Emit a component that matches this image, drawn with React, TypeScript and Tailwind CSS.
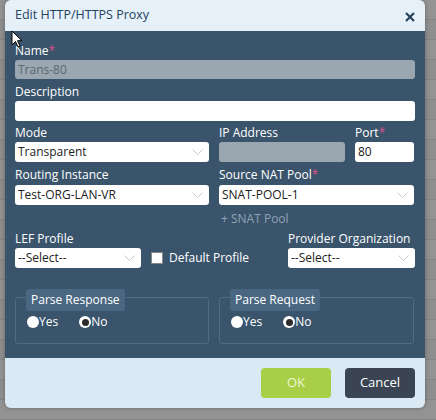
const Chevron = () => (
  <svg width="11" height="6" viewBox="0 0 11 6" className="shrink-0">
    <path d="M0.5 0.5l5 5 5-5" fill="none" stroke="#c3c8cd" strokeWidth="1" />
  </svg>
);

const Label = ({ text, req }: { text: string; req?: boolean }) => (
  <div className="text-[12px] leading-[16px] text-white">
    {text}
    {req && <span className="text-[#d9508a]">*</span>}
  </div>
);

const Select = ({ value, className = "" }: { value: string; className?: string }) => (
  <div
    className={`h-[20px] bg-white rounded-[3px] flex items-center pl-[3px] pr-[6px] text-[12px] text-[#222] ${className}`}
  >
    <span className="flex-1 truncate">{value}</span>
    <Chevron />
  </div>
);

const Radio = ({ checked, label }: { checked?: boolean; label: string }) => (
  <div className="flex items-center text-[12px] text-white">
    {checked ? (
      <span className="w-[12px] h-[12px] rounded-full bg-white flex items-center justify-center">
        <span className="w-[7px] h-[7px] rounded-full bg-[#2b2b2b]" />
      </span>
    ) : (
      <span className="w-[12px] h-[12px] rounded-full bg-white" />
    )}
    <span>{label}</span>
  </div>
);

const ParseBox = ({ title }: { title: string }) => (
  <div className="relative pt-[8px]">
    <div className="h-[47px] border border-[#4f6a83] rounded-[3px] flex items-end pb-[12px] pl-[11px] gap-[21px]">
      <Radio label="Yes" />
      <Radio checked label="No" />
    </div>
    <div className="absolute top-0 left-[11px] h-[22px] px-[5px] bg-[#4a6782] rounded-[3px] text-[12px] text-white flex items-center">
      {title}
    </div>
  </div>
);

export default function App() {
  const rows = Array.from({ length: 22 });
  return (
    <div
      className="relative w-[436px] h-[420px] overflow-hidden bg-[#8b8b8b]"
      style={{ fontFamily: '"Open Sans", "Liberation Sans", sans-serif' }}
    >
      <div className="flex flex-col">
        {rows.map((_, i) => (
          <div
            key={i}
            className={`h-[20px] border-b border-[#858585] ${i % 2 ? "bg-[#8e8e8e]" : "bg-[#939393]"}`}
          />
        ))}
      </div>

      <div className="absolute left-[5px] top-0 w-[420px] h-[408px] rounded-[6px] overflow-hidden flex flex-col shadow-[0_0_4px_rgba(0,0,0,0.3)]">
        <div className="h-[31px] bg-[#e5f0f9] flex items-center pl-[10px] pr-[10px] shrink-0">
          <span className="flex-1 text-[12.5px] text-[#24425b]">Edit HTTP/HTTPS Proxy</span>
          <svg width="10" height="10" viewBox="0 0 10 10" className="mt-[3px]">
            <path d="M1 1l8 8M9 1l-8 8" stroke="#24425b" strokeWidth="2.2" />
          </svg>
        </div>

        <div className="flex-1 bg-[#3a546c] px-[10px] pt-[12px]">
          <Label text="Name" req />
          <div className="mt-[1px] h-[19px] bg-[#9aa6b0] rounded-[3px] flex items-center pl-[3px] text-[12px] text-[#5a6670]">
            Trans-80
          </div>

          <div className="mt-[5px]">
            <Label text="Description" />
          </div>
          <div className="mt-[1px] h-[20px] bg-white rounded-[3px]" />

          <div className="mt-[4px] flex gap-[10px]">
            <div className="w-[194px]">
              <Label text="Mode" />
              <Select value="Transparent" className="mt-[1px]" />
            </div>
            <div className="w-[126px]">
              <Label text="IP Address" />
              <div className="mt-[1px] h-[20px] bg-[#9aa6b0] rounded-[3px]" />
            </div>
            <div className="w-[59px]">
              <Label text="Port" req />
              <div className="mt-[1px] h-[20px] bg-white rounded-[3px] flex items-center pl-[3px] text-[12px] text-[#222]">
                80
              </div>
            </div>
          </div>

          <div className="mt-[5px] flex gap-[10px]">
            <div className="w-[194px]">
              <Label text="Routing Instance" />
              <Select value="Test-ORG-LAN-VR" className="mt-[2px]" />
            </div>
            <div className="w-[195px]">
              <Label text="Source NAT Pool" req />
              <Select value="SNAT-POOL-1" className="mt-[2px]" />
              <div className="mt-[5px] pl-[2px] text-[12px] text-[#8fa3b5]">+ SNAT Pool</div>
            </div>
          </div>

          <div className="mt-[3px] flex items-end">
            <div className="w-[126px]">
              <Label text="LEF Profile" />
              <Select value="--Select--" className="mt-[1px]" />
            </div>
            <div className="ml-[10px] h-[20px] flex items-center gap-[6px] text-[12px] text-white">
              <span className="w-[12px] h-[12px] bg-white border border-[#888]" />
              Default Profile
            </div>
            <div className="ml-auto w-[127px]">
              <Label text="Provider Organization" />
              <Select value="--Select--" className="mt-[1px]" />
            </div>
          </div>

          <div className="mt-[21px] flex gap-[10px]">
            <div className="w-[194px]">
              <ParseBox title="Parse Response" />
            </div>
            <div className="w-[195px]">
              <ParseBox title="Parse Request" />
            </div>
          </div>
        </div>

        <div className="h-[50px] bg-[#dbe9f5] flex items-center justify-end gap-[14px] pr-[10px] shrink-0">
          <button className="w-[70px] h-[30px] rounded-[4px] bg-[#a8cf45] text-[13px] text-[#eef6d8]">OK</button>
          <button className="w-[70px] h-[30px] rounded-[4px] bg-[#3a4452] text-[13px] text-white">Cancel</button>
        </div>
      </div>

      <svg className="absolute left-[11px] top-[30px]" width="12" height="18" viewBox="0 0 12 18">
        <path d="M1 1v14l3.5-3.5 2.5 5.5 2-1-2.5-5.3H11z" fill="#fff" stroke="#000" strokeWidth="1" />
      </svg>
    </div>
  );
}
